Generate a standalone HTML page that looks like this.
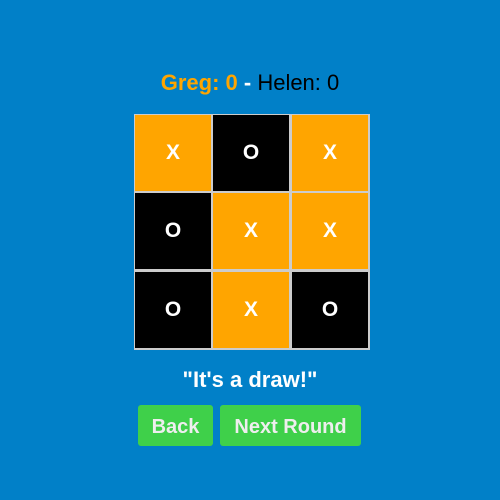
<!DOCTYPE html>
<html><head><style>
body{margin:0;width:500px;height:500px;background:#0180c8;font-family:"Liberation Sans",sans-serif;position:relative;overflow:hidden}
.score{position:absolute;top:70px;left:0;width:500px;text-align:center;font-size:22px;color:#000}
.score b{color:#ffa500}
.w{color:#fff;font-weight:bold}
.grid{position:absolute;left:134px;top:114px;width:236px;height:236px;background:#ccc}
.c{position:absolute;width:76px;height:76px;display:flex;align-items:center;justify-content:center;color:#fff;font-weight:bold;font-size:21px}
.o{background:#ffa500}.k{background:#000}
.msg{position:absolute;top:367px;left:0;width:500px;text-align:center;color:#fff;font-weight:bold;font-size:22px}
.btn{position:absolute;top:405px;height:41px;padding-top:3px;box-sizing:border-box;background:#3fd04a;border-radius:3px;color:#eee;font-weight:bold;font-size:20px;display:flex;align-items:center;justify-content:center}
</style></head><body>
<div class="score"><b>Greg: 0</b> <span class="w">-</span> Helen: 0</div>
<div class="grid">
<div class="c o" style="left:1px;top:1px">X</div>
<div class="c k" style="left:79px;top:1px">O</div>
<div class="c o" style="left:158px;top:1px">X</div>
<div class="c k" style="left:1px;top:79px">O</div>
<div class="c o" style="left:79px;top:79px">X</div>
<div class="c o" style="left:158px;top:79px">X</div>
<div class="c k" style="left:1px;top:158px">O</div>
<div class="c o" style="left:79px;top:158px">X</div>
<div class="c k" style="left:158px;top:158px">O</div>
</div>
<div class="msg">"It's a draw!"</div>
<div class="btn" style="left:138px;width:75px">Back</div>
<div class="btn" style="left:220px;width:141px">Next Round</div>
</body></html>
